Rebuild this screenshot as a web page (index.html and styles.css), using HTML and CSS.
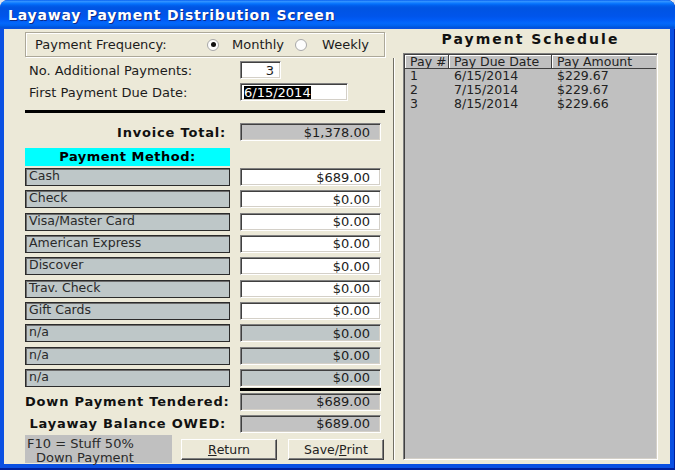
FILE: index.html
```html
<!DOCTYPE html>
<html>
<head>
<meta charset="utf-8">
<link rel="stylesheet" href="styles.css">
</head>
<body>
<div class="window">
  <div class="titlebar"><span class="title">Layaway Payment Distribution Screen</span></div>
  <div class="client">
    <div class="left">
      <div class="freq">
        <span class="freq-label">Payment Frequency:</span>
        <span class="radio r1"><span class="dot"></span></span>
        <span class="opt o1">Monthly</span>
        <span class="radio r2"></span>
        <span class="opt o2">Weekly</span>
      </div>
      <div class="body-wrap">
        <div class="main">
          <div class="frow f1">
            <span class="lbl">No. Additional Payments:</span>
            <span class="inp num">3</span>
          </div>
          <div class="frow f2">
            <span class="lbl">First Payment Due Date:</span>
            <span class="inp date"><span class="sel">6/15/2014</span></span>
          </div>
          <div class="rule"></div>
          <div class="row invoice">
            <span class="blbl">Invoice Total:</span>
            <span class="val gray">$1,378.00</span>
          </div>
          <div class="cyan">Payment Method:</div>
          <div class="methods">
            <div class="mrow"><span class="mlabel">Cash</span><span class="val white">$689.00</span></div>
            <div class="mrow"><span class="mlabel">Check</span><span class="val white">$0.00</span></div>
            <div class="mrow"><span class="mlabel">Visa/Master Card</span><span class="val white">$0.00</span></div>
            <div class="mrow"><span class="mlabel">American Express</span><span class="val white">$0.00</span></div>
            <div class="mrow"><span class="mlabel">Discover</span><span class="val white">$0.00</span></div>
            <div class="mrow"><span class="mlabel">Trav. Check</span><span class="val white">$0.00</span></div>
            <div class="mrow"><span class="mlabel">Gift Cards</span><span class="val white">$0.00</span></div>
            <div class="mrow"><span class="mlabel">n/a</span><span class="val na">$0.00</span></div>
            <div class="mrow"><span class="mlabel">n/a</span><span class="val na">$0.00</span></div>
            <div class="mrow"><span class="mlabel">n/a</span><span class="val na">$0.00</span></div>
          </div>
          <div class="rule2"></div>
          <div class="row down">
            <span class="blbl">Down Payment Tendered:</span>
            <span class="val gray">$689.00</span>
          </div>
          <div class="row owed">
            <span class="blbl">Layaway Balance OWED:</span>
            <span class="val gray">$689.00</span>
          </div>
          <div class="bottom">
            <div class="f10"><div class="l1">F10 = Stuff 50%</div><div class="l2">Down Payment</div></div>
            <div class="btn b1"><span class="u">R</span>eturn</div>
            <div class="btn b2">Save/<span class="u">P</span>rint</div>
          </div>
        </div>
        <div class="divider"></div>
      </div>
    </div>
    <div class="right">
      <div class="sched-title">Payment Schedule</div>
      <div class="sched">
        <div class="srow head">
          <span class="c">Pay #</span><span class="c">Pay Due Date</span><span class="c">Pay Amount</span>
        </div>
        <div class="srow"><span class="c">1</span><span class="c">6/15/2014</span><span class="c">$229.67</span></div>
        <div class="srow"><span class="c">2</span><span class="c">7/15/2014</span><span class="c">$229.67</span></div>
        <div class="srow"><span class="c">3</span><span class="c">8/15/2014</span><span class="c">$229.66</span></div>
      </div>
    </div>
  </div>
</div>
</body>
</html>
```
FILE: styles.css
```css
* { box-sizing: border-box; }
html, body { margin: 0; padding: 0; }
body {
  width: 675px; height: 470px; overflow: hidden;
  background: #dfe4ee;
  font-family: "DejaVu Sans", Verdana, sans-serif;
  font-size: 13px; color: #1c1c1c;
}
.window {
  width: 675px; height: 470px;
  background: #0a50e2;
  border-radius: 8px 8px 0 0;
  display: flex; flex-direction: column;
  overflow: hidden;
  box-shadow: inset 0 -2px #00209c, inset -1px 0 #00209c;
}
.titlebar {
  height: 29px; flex: none;
  display: flex; align-items: center; padding-left: 8px;
  background: linear-gradient(to bottom, #0058ee 0%, #3593ff 4%, #288eff 7%, #127dff 10%, #036ffc 14%, #0262ee 18%, #0057e5 24%, #0054e3 30%, #0055eb 56%, #005bf5 68%, #0368fc 80%, #0062ef 88%, #0055dc 94%, #0a50e2 100%);
}
.title {
  color: #fff; font-weight: bold; font-size: 14px; letter-spacing: 0.8px;
  text-shadow: 1px 1px #0c2a86;
}
.client {
  margin: 0 5px 6px 4px;
  background: #ece9d8;
  flex: 1;
  display: flex;
}
.left {
  width: 391px; flex: none;
  padding: 3px 0 0 21px;
  display: flex; flex-direction: column;
}
.freq {
  width: 360px; height: 25px;
  border: 1px solid #aca899;
  box-shadow: inset 1px 1px #fff, 1px 1px #fff;
  display: flex; align-items: center;
  padding-left: 9px;
}
.freq-label { width: 172px; flex: none; }
.radio {
  width: 12px; height: 12px; flex: none;
  border-radius: 50%;
  border: 1px solid #a8a8a8;
  background: #fdfdfd;
  display: flex; align-items: center; justify-content: center;
}
.radio .dot { width: 5px; height: 5px; border-radius: 50%; background: #111; }
.o1 { margin-left: 13px; }
.r2 { margin-left: 11px; }
.o2 { margin-left: 15px; }

.body-wrap { display: flex; flex: 1; }
.main { width: 360px; flex: none; display: flex; flex-direction: column; }
.divider {
  width: 2px; margin: 1px 0 4px 8px;
  border-left: 1px solid #716f64; border-right: 1px solid #fff;
}

.frow { display: flex; align-items: center; height: 18px; margin-top: 4px; }
.frow .lbl { width: 215px; padding-left: 4px; }
.inp {
  height: 18px; background: #fff;
  border: 1px solid; border-color: #808080 #fff #fff #808080;
  box-shadow: inset 1px 1px #404040, inset -1px -1px #d4d0c8;
  display: flex; align-items: center;
}
.inp.num { width: 41px; justify-content: flex-end; padding-right: 6px; }
.inp.date { width: 108px; padding-left: 3px; }
.sel { background: #000; color: #fff; line-height: 13px; }

.rule { width: 360px; height: 3px; background: #000; margin-top: 9px; }

.row { display: flex; align-items: center; height: 18px; }
.invoice { margin-top: 10px; }
.down { margin-top: 2px; }
.owed { margin-top: 4px; }
.blbl {
  width: 215px; text-align: right; padding-right: 14px;
  font-weight: bold; letter-spacing: 0.8px; color: #111;
  white-space: nowrap;
}
.val {
  width: 141px; height: 18px; flex: none;
  display: flex; align-items: center; justify-content: flex-end;
  padding-right: 10px;
  border: 1px solid; border-color: #808080 #fff #fff #808080;
  box-shadow: inset 1px 1px #404040, inset -1px -1px #d4d0c8;
}
.val.white { background: #fff; }
.val.gray { background: #c2c2c2; }
.val.na { background: #bfc7c8; }

.cyan {
  margin-top: 7px; width: 205px; height: 18px;
  background: #00ffff; font-weight: bold; letter-spacing: 0.5px;
  text-align: center; line-height: 18px; color: #000;
}
.methods { display: flex; flex-direction: column; gap: 4.33px; margin-top: 2px; }
.mrow { display: flex; height: 18px; }
.mlabel {
  width: 205px; margin-right: 10px; height: 18px;
  background: #bec7c8;
  border: 1px solid #2b2b2b;
  box-shadow: inset 1px 1px #6b6b6b;
  padding-left: 3px; font-size: 12.5px; line-height: 14px; color: #2a2a2a;
}
.rule2 { margin: 1px 0 0 215px; width: 141px; height: 3px; background: #000; }

.bottom { display: flex; margin-top: 2px; align-items: flex-start; }
.f10 {
  width: 147px; height: 28px;
  background: #c0c0c0;
  padding: 2px 0 0 2px;
  font-size: 13px; color: #2a2a2a;
}
.f10 .l1, .f10 .l2 { height: 14px; line-height: 14px; white-space: nowrap; }
.f10 .l2 { padding-left: 9px; }
.btn {
  width: 96px; height: 21px; margin-top: 4px;
  border: 1px solid; border-color: #fff #404040 #404040 #fff;
  box-shadow: inset -1px -1px #808080;
  display: flex; align-items: center; justify-content: center;
  font-size: 12.5px; color: #222;
}
.b1 { margin-left: 9px; }
.b2 { margin-left: 11px; }
.u { text-decoration: underline; }

.right {
  flex: 1; padding: 0 12px 0 8px;
  display: flex; flex-direction: column;
}
.sched-title {
  height: 24px; line-height: 20px; text-align: center;
  font-weight: bold; font-size: 14px; letter-spacing: 2px; color: #111;
}
.sched {
  height: 407px;
  background: #c0c0c0;
  border: 1px solid; border-color: #808080 #fff #fff #808080;
  box-shadow: inset 1px 1px #404040, inset -1px -1px #d4d0c8;
  padding: 1px;
}
.srow {
  display: grid; grid-template-columns: 44px 103px 1fr;
  height: 13.75px; line-height: 13.75px; font-size: 12.5px; color: #222;
}
.srow .c { padding-left: 5px; white-space: nowrap; overflow: hidden; }
.srow.head { height: 14px; line-height: 13px; }
.srow.head .c {
  border-right: 1px solid #404040; border-bottom: 1px solid #404040;
  box-shadow: inset 1px 1px #fff;
}
.srow.head .c:last-child { border-right: none; }
```
